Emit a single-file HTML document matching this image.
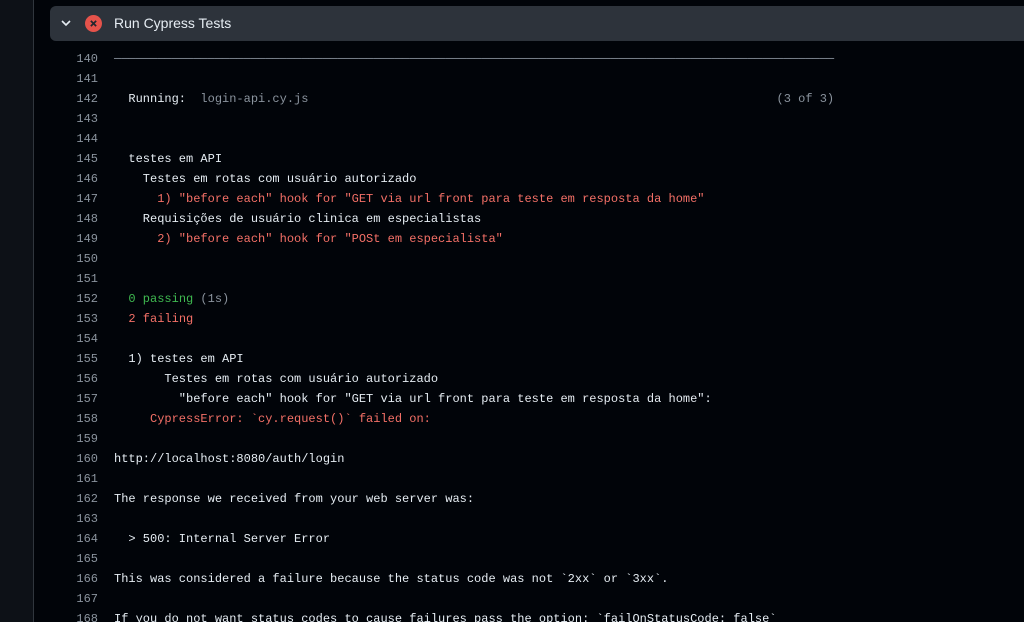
<!DOCTYPE html>
<html><head><meta charset="utf-8"><style>
html,body{margin:0;width:1024px;height:622px;overflow:hidden}
body{background:#010409;font-family:"Liberation Sans",sans-serif;position:relative}
.side{position:absolute;left:0;top:0;width:33px;height:622px;background:#0d1117;border-right:1px solid #30363d}
.hdr{position:absolute;left:50px;top:6px;width:990px;height:35px;background:#2d333b;border-radius:6px;color:#e6edf3;font-size:14px}
.hdr .t{position:absolute;left:64px;top:9px}
.log{position:absolute;left:34px;top:49px;font-family:"Liberation Mono",monospace;font-size:12px;color:#e6edf3}
.l{height:20px;line-height:20px;white-space:pre;position:relative}
.n{display:inline-block;width:64px;text-align:right;color:#8b949e;margin-right:16px}
.g{color:#8b949e}.gr{color:#3fb950}.r{color:#f47067}
</style></head><body>
<div class="side"></div>
<div class="hdr">
<svg style="position:absolute;left:10px;top:11px" width="12" height="12" viewBox="0 0 12 12"><path d="M2 4l4 4 4-4" fill="none" stroke="#e6edf3" stroke-width="1.6"/></svg>
<svg style="position:absolute;left:35px;top:9px" width="17" height="17" viewBox="0 0 16 16"><circle cx="8" cy="8" r="8" fill="#e5534b"/><path d="M5.5 5.5l5 5M10.5 5.5l-5 5" stroke="#22272e" stroke-width="1.6"/></svg>
<span class="t">Run Cypress Tests</span></div>
<div class="log">
<div class="l"><span class="n">140</span><span class="g">────────────────────────────────────────────────────────────────────────────────────────────────────</span></div>
<div class="l"><span class="n">141</span></div>
<div class="l"><span class="n">142</span>  Running:  <span class="g">login-api.cy.js                                                                 (3 of 3)</span></div>
<div class="l"><span class="n">143</span></div>
<div class="l"><span class="n">144</span></div>
<div class="l"><span class="n">145</span>  testes em API</div>
<div class="l"><span class="n">146</span>    Testes em rotas com usuário autorizado</div>
<div class="l"><span class="n">147</span><span class="r">      1) "before each" hook for "GET via url front para teste em resposta da home"</span></div>
<div class="l"><span class="n">148</span>    Requisições de usuário clinica em especialistas</div>
<div class="l"><span class="n">149</span><span class="r">      2) "before each" hook for "POSt em especialista"</span></div>
<div class="l"><span class="n">150</span></div>
<div class="l"><span class="n">151</span></div>
<div class="l"><span class="n">152</span>  <span class="gr">0 passing</span> <span class="g">(1s)</span></div>
<div class="l"><span class="n">153</span>  <span class="r">2 failing</span></div>
<div class="l"><span class="n">154</span></div>
<div class="l"><span class="n">155</span>  1) testes em API</div>
<div class="l"><span class="n">156</span>       Testes em rotas com usuário autorizado</div>
<div class="l"><span class="n">157</span>         "before each" hook for "GET via url front para teste em resposta da home":</div>
<div class="l"><span class="n">158</span><span class="r">     CypressError: `cy.request()` failed on:</span></div>
<div class="l"><span class="n">159</span></div>
<div class="l"><span class="n">160</span>http://localhost:8080/auth/login</div>
<div class="l"><span class="n">161</span></div>
<div class="l"><span class="n">162</span>The response we received from your web server was:</div>
<div class="l"><span class="n">163</span></div>
<div class="l"><span class="n">164</span>  &gt; 500: Internal Server Error</div>
<div class="l"><span class="n">165</span></div>
<div class="l"><span class="n">166</span>This was considered a failure because the status code was not `2xx` or `3xx`.</div>
<div class="l"><span class="n">167</span></div>
<div class="l"><span class="n">168</span>If you do not want status codes to cause failures pass the option: `failOnStatusCode: false`</div>
</div>
</body></html>
